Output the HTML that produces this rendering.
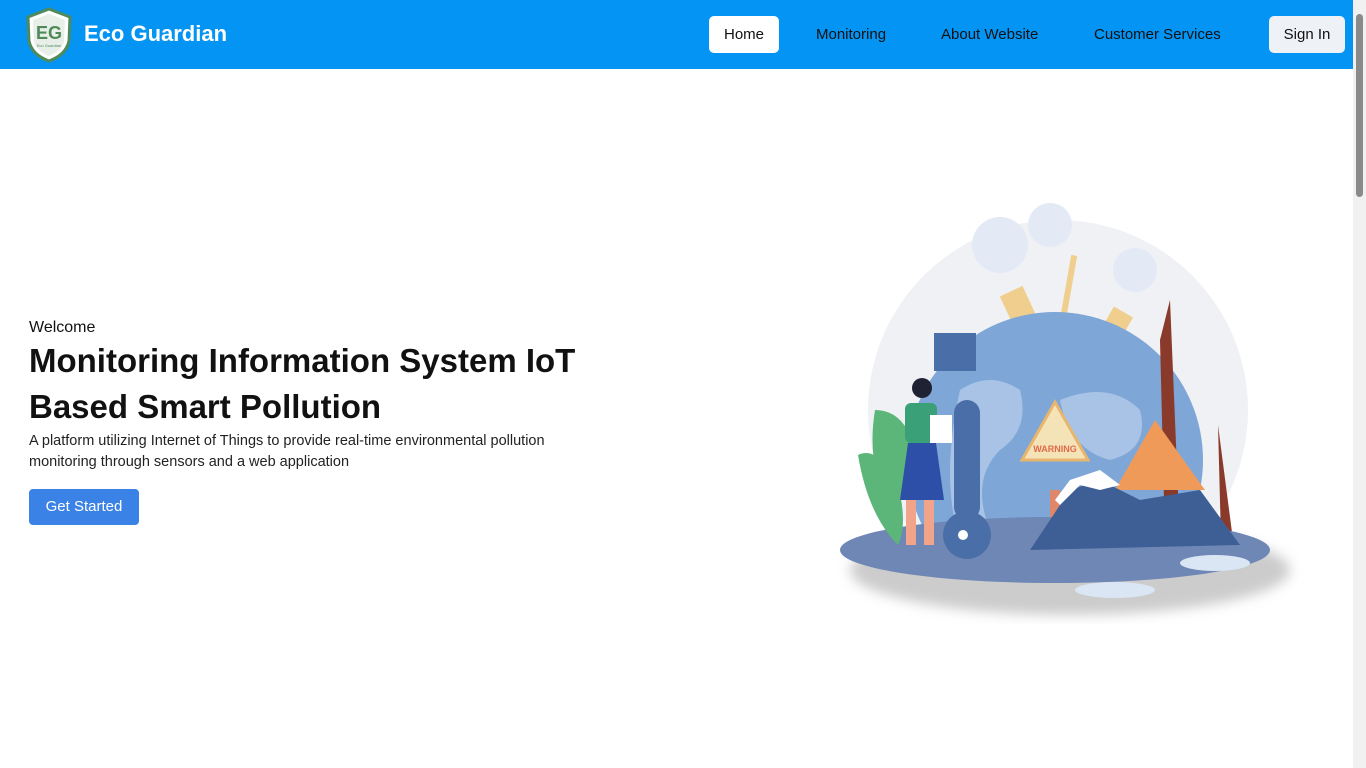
<!DOCTYPE html>
<html><head><meta charset="utf-8"><style>
*{margin:0;padding:0;box-sizing:border-box}
body{width:1366px;height:768px;overflow:hidden;background:#fff;font-family:"Liberation Sans",sans-serif;position:relative}
nav{position:absolute;left:0;top:0;width:1353px;height:69px;background:#0494f4}
.brand{position:absolute;left:84px;top:21px;color:#fff;font-weight:bold;font-size:22px}
.nl{position:absolute;top:16px;line-height:37px;font-size:15px;color:#111}
.btn{position:absolute;background:#fff;border-radius:5px;font-size:15px;color:#111;text-align:center;line-height:37px}
.sb{position:absolute;right:0;top:0;width:13px;height:768px;background:#f1f1f1}
.sb div{position:absolute;left:3px;top:14px;width:7px;height:183px;background:#8a8a8a;border-radius:4px}
</style></head><body>
<nav>
<svg style="position:absolute;left:22px;top:7px" width="54" height="56" viewBox="0 0 54 56">
<path d="M27 2 L48 10 L47 34 Q44 48 27 54 Q10 48 7 34 L6 10 Z" fill="#fff" stroke="#4f8a5b" stroke-width="3"/>
<path d="M27 7 L43 13 L42 34 Q40 44 27 49 Q14 44 12 34 L11 13 Z" fill="#e8efe8"/>
<text x="27" y="32" text-anchor="middle" font-family="Liberation Sans" font-weight="bold" font-size="18" fill="#4f8a5b">EG</text>
<text x="27" y="40" text-anchor="middle" font-size="4" fill="#4f8a5b">Eco Guardian</text>
</svg>
<div class="brand">Eco Guardian</div>
<div class="btn" style="left:709px;top:16px;width:70px;height:37px">Home</div>
<div class="nl" style="left:816px">Monitoring</div>
<div class="nl" style="left:941px">About Website</div>
<div class="nl" style="left:1094px">Customer Services</div>
<div class="btn" style="left:1269px;top:16px;width:76px;height:37px;background:#eef1f6">Sign In</div>
</nav>
<div style="position:absolute;left:29px;top:319px;font-size:16px;color:#111">Welcome</div>
<div style="position:absolute;left:29px;top:338px;font-size:33px;font-weight:bold;color:#111;line-height:46px;width:600px">Monitoring Information System IoT Based Smart Pollution</div>
<div style="position:absolute;left:29px;top:431px;font-size:14.5px;color:#222;line-height:21px;width:580px">A platform utilizing Internet of Things to provide real-time environmental pollution monitoring through sensors and a web application</div>
<div style="position:absolute;left:29px;top:489px;width:110px;height:36px;background:#3b82e6;border-radius:4px;color:#fff;font-size:15px;text-align:center;line-height:35px">Get Started</div>
<svg style="position:absolute;left:800px;top:190px" width="500" height="450" viewBox="800 190 500 450">
<defs><filter id="s"><feGaussianBlur stdDeviation="6"/></filter>
<clipPath id="c"><rect x="800" y="190" width="500" height="365"/></clipPath></defs>
<ellipse cx="1070" cy="570" rx="220" ry="45" fill="#ccc" filter="url(#s)"/>
<circle cx="1058" cy="410" r="190" fill="#f0f1f4" clip-path="url(#c)"/>
<circle cx="1000" cy="245" r="28" fill="#e3eaf6"/><circle cx="1050" cy="225" r="22" fill="#e3eaf6"/><circle cx="1135" cy="270" r="22" fill="#e3eaf6"/>
<rect x="1005" y="290" width="25" height="30" fill="#f0cf8e" transform="rotate(-25 1017 305)"/>
<rect x="1066" y="255" width="6" height="60" fill="#f0cf8e" transform="rotate(10 1069 285)"/>
<rect x="1105" y="310" width="22" height="30" fill="#f0cf8e" transform="rotate(30 1116 325)"/>
<g clip-path="url(#c)">
<circle cx="1055" cy="460" r="148" fill="#7ea6d6"/>
<path d="M960 390 q30 -20 60 0 q10 40 -20 60 q-30 30 -10 80 l-30 10 q-20 -60 0 -150z M1060 400 q50 -20 80 10 q10 40 -30 50 q-40 -10 -50 -60z" fill="#a8c3e6"/>
</g>
<rect x="934" y="333" width="42" height="38" fill="#4a6fa8"/>
<rect x="1050" y="490" width="10" height="60" fill="#e0876a"/>
<path d="M1055 402 L1088 460 L1022 460 Z" fill="#f5e3b8" stroke="#e8b56e" stroke-width="3"/>
<text x="1055" y="452" text-anchor="middle" font-size="9" font-weight="bold" fill="#e06a4a">WARNING</text>
<path d="M1170 300 l10 240 h-15 l-5 -200z M1218 425 l15 115 h-12z" fill="#8a3a2a"/>
<path d="M1115 490 l40 -70 l50 70z" fill="#f09a5a"/>
<ellipse cx="1055" cy="550" rx="215" ry="33" fill="#6f87b5"/>
<path d="M1030 550 l40 -60 l30 -10 l40 20 l60 -10 l40 55z" fill="#3e5f95"/>
<path d="M1055 500 l15 -20 l30 -10 l20 15 l-20 5 l-20 -5 l-20 20z" fill="#fff"/>
<ellipse cx="1215" cy="563" rx="35" ry="8" fill="#dbe6f4"/>
<ellipse cx="1115" cy="590" rx="40" ry="8" fill="#dbe6f4"/>
<path d="M858 455 q20 -10 40 30 q10 40 0 60 q-30 -30 -40 -90z M875 410 q30 0 40 40 l-20 70 q-30 -50 -20 -110z" fill="#5cb67a"/>
<rect x="954" y="400" width="26" height="120" rx="13" fill="#4a6fa8"/>
<circle cx="967" cy="535" r="24" fill="#4a6fa8"/><circle cx="963" cy="535" r="5" fill="#fff"/>
<circle cx="922" cy="388" r="10" fill="#1f2233"/>
<rect x="905" y="403" width="32" height="40" rx="6" fill="#3aa078"/>
<path d="M900 500 l8 -57 h28 l8 57z" fill="#2d4fa8"/>
<rect x="906" y="500" width="10" height="45" fill="#f2a48a"/><rect x="924" y="500" width="10" height="45" fill="#f2a48a"/>
<rect x="930" y="415" width="22" height="28" fill="#fff"/>
</svg>
<div class="sb"><div></div></div>
</body></html>
